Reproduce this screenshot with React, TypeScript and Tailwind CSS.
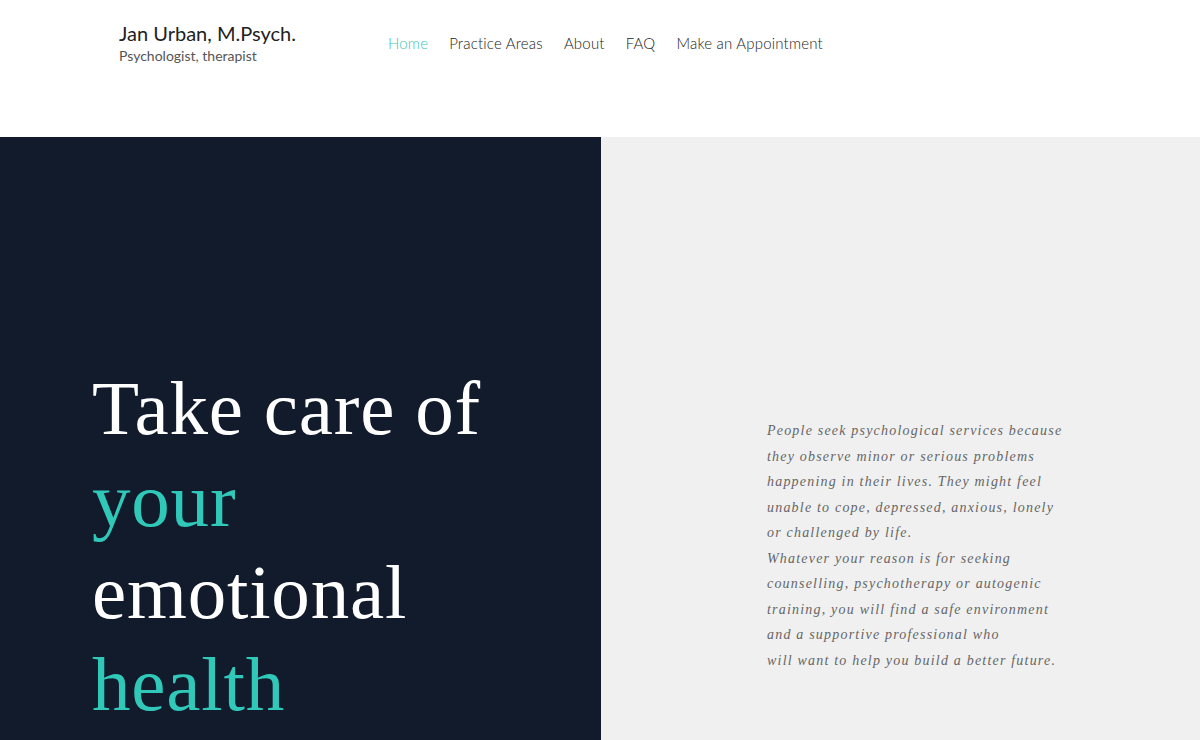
export default function App() {
  const nav = ["Home", "Practice Areas", "About", "FAQ", "Make an Appointment"]
  const lines = [
    "People seek psychological services because",
    "they observe minor or serious problems",
    "happening in their lives. They might feel",
    "unable to cope, depressed, anxious, lonely",
    "or challenged by life.",
    "Whatever your reason is for seeking",
    "counselling, psychotherapy or autogenic",
    "training, you will find a safe environment",
    "and a supportive professional who",
    "will want to help you build a better future.",
  ]

  return (
    <div className="w-[1200px] h-[740px] overflow-hidden bg-white">
      {/* header */}
      <header className="h-[137px] flex items-start pl-[119px] pt-[20px] font-['Lato','Noto_Sans',sans-serif]">
        <div className="w-[269px]">
          <div className="text-[20px] leading-[26px] text-[#222]">Jan Urban, M.Psych.</div>
          <div className="text-[14px] leading-[20px] text-[#555]">Psychologist, therapist</div>
        </div>
        <nav className="flex gap-[21px] pt-[14px] text-[15px] leading-[18px] font-light tracking-[0.2px] text-[#222]">
          {nav.map((n, i) => (
            <a key={n} className={i === 0 ? "text-[#3cc5b8]" : ""}>
              {n}
            </a>
          ))}
        </nav>
      </header>

      {/* hero */}
      <section className="flex h-[603px]">
        <div className="w-[601px] bg-[#111b2b] pl-[92px] pt-[225px]">
          <h1 className="font-['Liberation_Serif','DejaVu_Serif',serif] text-[77px] leading-[92px] text-white tracking-[0.8px]">
            Take care of
            <br />
            <span className="text-[#30c9b9]">your</span>
            <br />
            emotional
            <br />
            <span className="text-[#30c9b9]">health</span>
          </h1>
        </div>
        <div className="flex-1 bg-[#f0f0f0] pl-[166px] pt-[281px]">
          <p className="font-['Liberation_Serif','DejaVu_Serif',serif] italic text-[14px] leading-[25.5px] tracking-[1.2px] text-[#666]">
            {lines.map((l) => (
              <span key={l} className="block">
                {l}
              </span>
            ))}
          </p>
        </div>
      </section>
    </div>
  )
}
